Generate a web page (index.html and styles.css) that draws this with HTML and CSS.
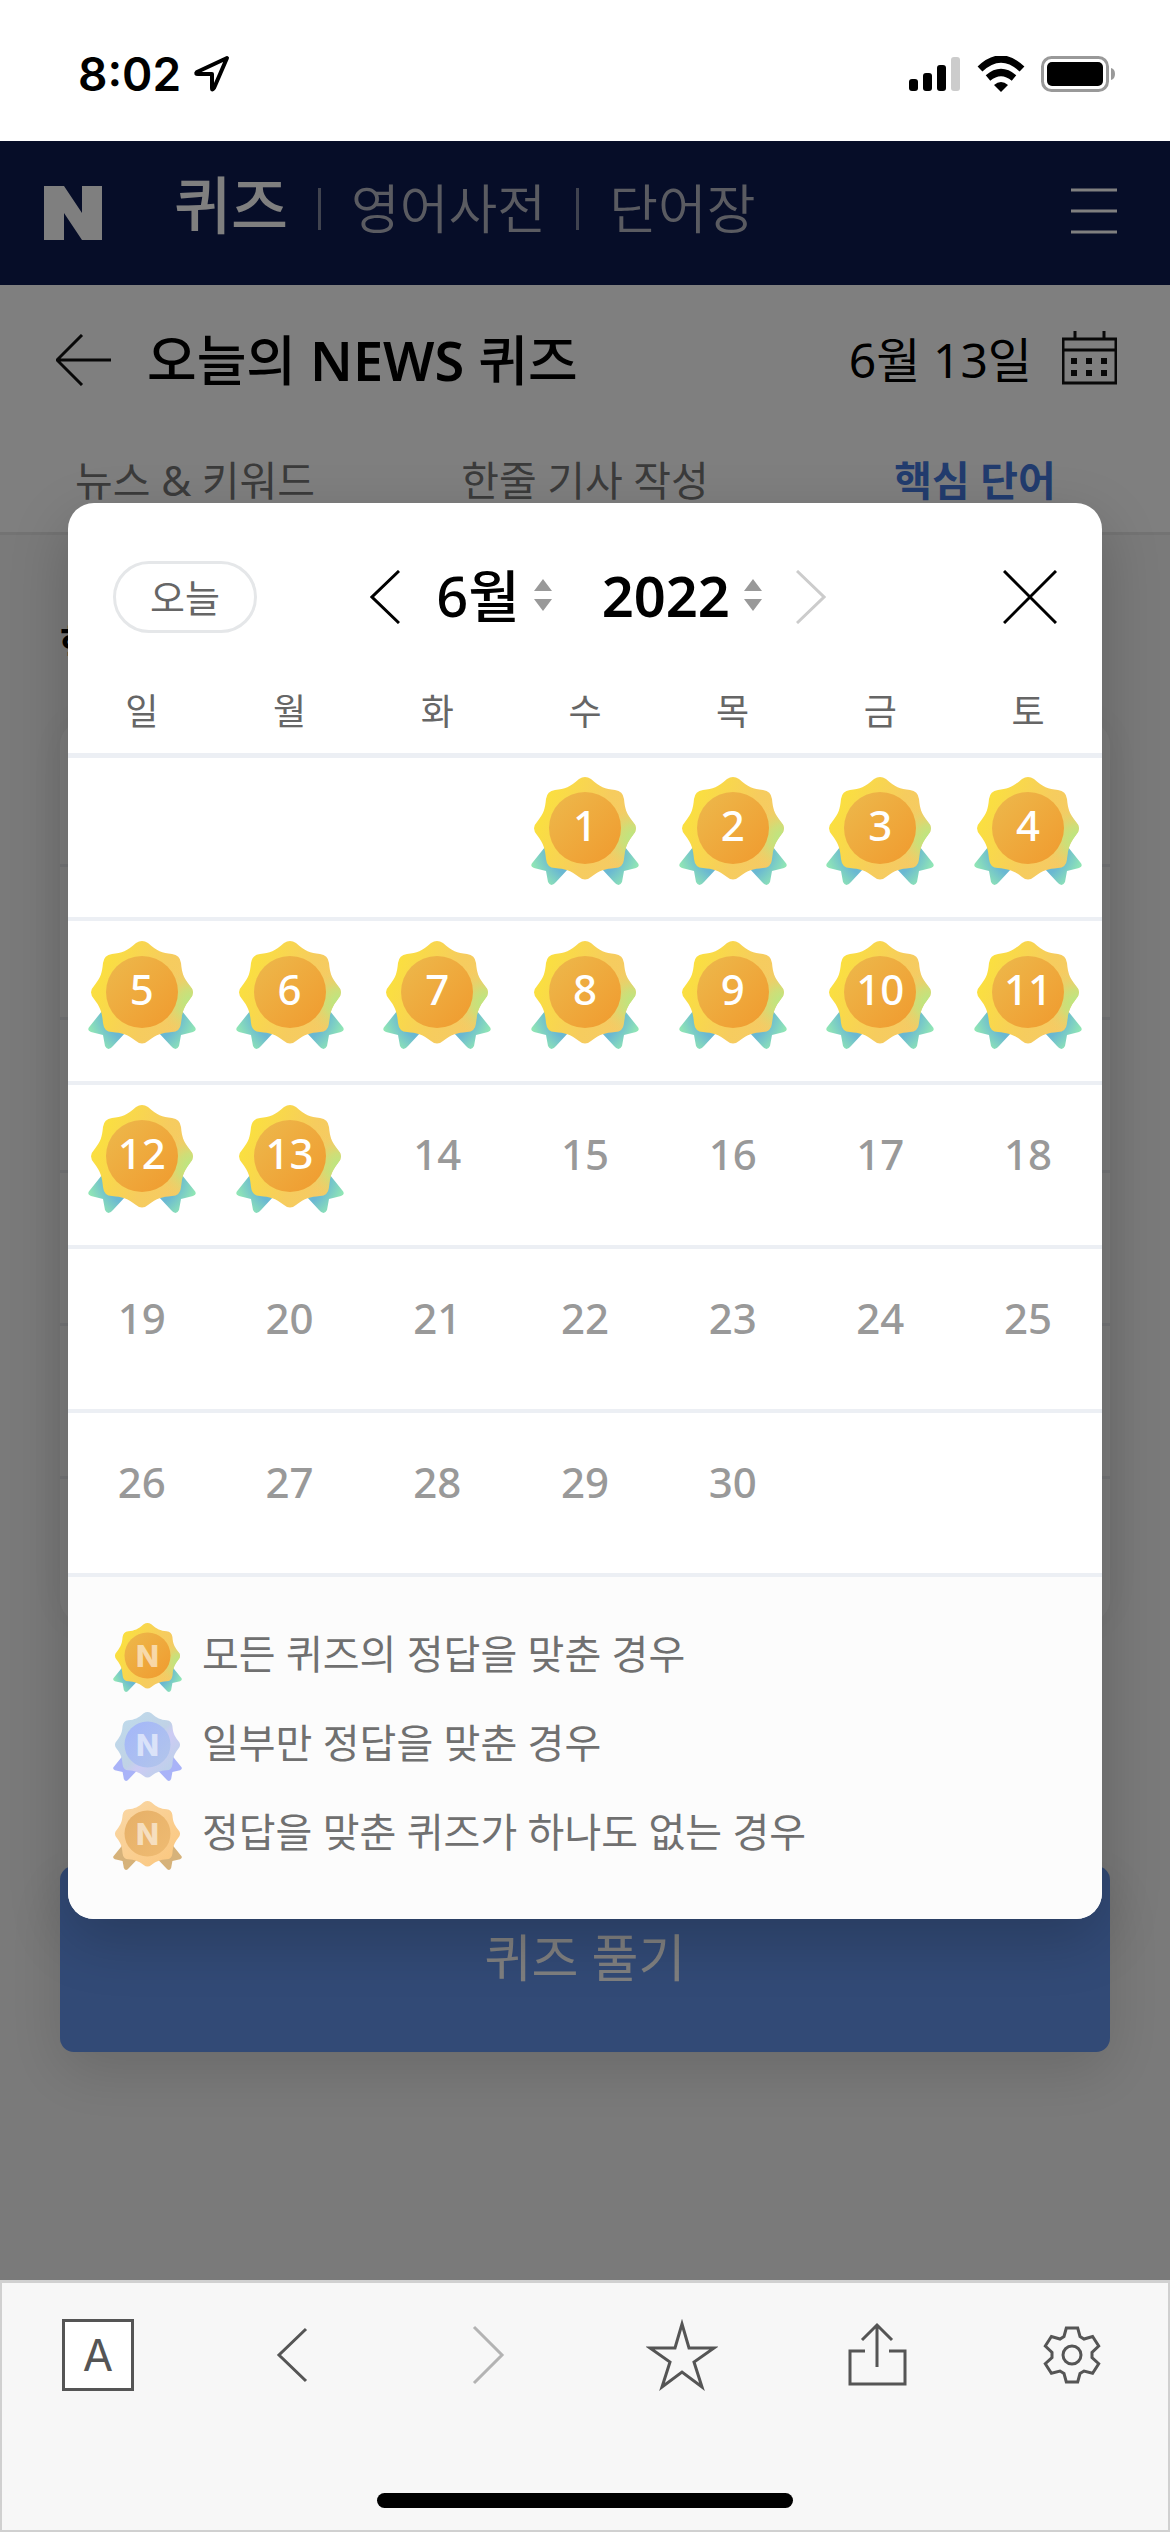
FILE: index.html
```html
<!DOCTYPE html>
<html lang="ko">
<head>
<meta charset="utf-8">
<meta name="viewport" content="width=device-width, initial-scale=1">
<title>오늘의 NEWS 퀴즈</title>
<link rel="stylesheet" href="styles.css">
</head>
<body>
<svg class="defs" aria-hidden="true">
  <defs>
    <linearGradient id="gold" x1="0" y1="0.3" x2="1" y2="0.7"><stop offset="0" stop-color="#fbe23c"/><stop offset=".6" stop-color="#f6cc5e"/><stop offset="1" stop-color="#f5ca66"/></linearGradient>
    <radialGradient id="goldTip" gradientUnits="userSpaceOnUse" cx="104" cy="62" r="36"><stop offset="0" stop-color="#b4ea86"/><stop offset=".4" stop-color="#c6e27c" stop-opacity=".8"/><stop offset="1" stop-color="#f5ca66" stop-opacity="0"/></radialGradient>
    <linearGradient id="goldIn" x1="0" y1="0" x2="1" y2="1"><stop offset="0" stop-color="#edb94c"/><stop offset="1" stop-color="#f09a2e"/></linearGradient>
    <radialGradient id="goldTail" gradientUnits="userSpaceOnUse" cx="54" cy="66" r="58"><stop offset=".65" stop-color="#6ab8d2"/><stop offset="1" stop-color="#92e8b4"/></radialGradient>
    <linearGradient id="blue" x1="0" y1="0" x2="1" y2="1"><stop offset="0" stop-color="#bfdcec"/><stop offset=".5" stop-color="#c0d2e6"/><stop offset=".6" stop-color="#cdcbf4"/><stop offset="1" stop-color="#b4d4e4"/></linearGradient>
    <linearGradient id="blueIn" x1="0" y1="0" x2="1" y2="1"><stop offset="0" stop-color="#a3b6fa"/><stop offset="1" stop-color="#b3c6ea"/></linearGradient>
    <linearGradient id="bronze" x1="0" y1="0" x2="1" y2="1"><stop offset="0" stop-color="#f9d8a8"/><stop offset="1" stop-color="#fbc67c"/></linearGradient>
    <linearGradient id="bronzeIn" x1="0" y1="0" x2="1" y2="1"><stop offset="0" stop-color="#e6b068"/><stop offset="1" stop-color="#efbb72"/></linearGradient>
    <path id="tails" d="M14 70Q18 74 34 84L38 91L25 105Q20 111 17 105L15 94L3 91Q-2 89 2 85ZM94 70Q90 74 74 84L70 91L83 105Q88 111 91 105L93 94L105 91Q110 89 106 85Z"/>
    <path id="flower" d="M48 2Q54-2 60 2C69 10 74 12 84 13Q92 14 93 22C94 32 95 36 102 45Q108 51 102 58C95 67 94 72 93 82Q92 91 84 91C74 92 69 93 60 100Q54 105 48 100C39 93 34 92 24 91Q16 91 15 82C14 72 13 67 6 58Q0 51 6 45C13 36 14 32 15 22Q16 14 24 13C34 12 39 10 48 2Z"/>
    <symbol id="medal-gold" viewBox="0 0 108 108"><use href="#tails" fill="url(#goldTail)"/><use href="#flower" fill="url(#gold)"/><use href="#flower" fill="url(#goldTip)"/><circle cx="54" cy="51" r="36" fill="url(#goldIn)"/></symbol>
    <symbol id="medal-blue" viewBox="0 0 108 108"><use href="#tails" fill="#a9b3f8"/><use href="#flower" fill="url(#blue)"/><circle cx="54" cy="51" r="36" fill="url(#blueIn)"/></symbol>
    <symbol id="medal-bronze" viewBox="0 0 108 108"><use href="#tails" fill="#d6b27a"/><use href="#flower" fill="url(#bronze)"/><circle cx="54" cy="51" r="36" fill="url(#bronzeIn)"/></symbol>
  </defs>
</svg>

<div class="status">
  <div class="status-left">
    <span class="clock">8:02</span>
    <svg width="38" height="38" viewBox="0 0 38 38"><path d="M34 3 4 17Q2 19 5 19H19V33Q19 36 21 33Z" fill="none" stroke="#000" stroke-width="4" stroke-linejoin="round"/></svg>
  </div>
  <div class="status-right">
    <svg width="52" height="36" viewBox="0 0 52 36"><rect x="0" y="23" width="9" height="12" rx="3"/><rect x="14" y="17" width="9" height="18" rx="3"/><rect x="28" y="9" width="9" height="26" rx="3"/><rect x="42" y="1" width="9" height="34" rx="3" fill="#ccc"/></svg>
    <svg width="48" height="36" viewBox="0 0 48 36"><path d="M3 13Q24-7 45 13M11 22Q24 11 37 22" fill="none" stroke="#000" stroke-width="7"/><path d="M24 36 17 29Q24 23 31 29Z"/></svg>
    <svg width="75" height="36" viewBox="0 0 75 36"><rect x="1.500" y="1.500" width="65" height="33" rx="9" fill="none" stroke="#999" stroke-width="3"/><rect x="6" y="6" width="56" height="24" rx="5"/><path d="M70 12Q74 13 74 18T70 24Z" fill="#999"/></svg>
  </div>
</div>

<div class="app">
  <header class="gnb">
    <a class="logo" href="#" aria-label="N"><svg width="58" height="54" viewBox="0 0 58 54"><path d="M0 0H20L38 27V0H58V54H38L20 27V54H0Z" fill="#fff"/></svg></a>
    <nav class="gnb-nav">
      <a class="current" href="#">퀴즈</a>
      <a href="#">영어사전</a>
      <a href="#">단어장</a>
    </nav>
    <button class="icon-btn" aria-label="메뉴"><svg width="46" height="50" viewBox="0 0 46 50"><path d="M0 2H46M0 23H46M0 44H46" stroke="#fff" stroke-width="3"/></svg></button>
  </header>
  <section class="page-head">
    <div class="title-row">
      <button class="icon-btn" aria-label="뒤로"><svg width="55" height="52" viewBox="0 0 55 52"><path d="M26 1 1 26 26 51M1 26H55" fill="none" stroke="#111" stroke-width="3"/></svg></button>
      <h1>오늘의 <b>NEWS</b> 퀴즈</h1>
      <span class="today-date">6월 13일</span>
      <button class="icon-btn" aria-label="달력"><svg width="55" height="58" viewBox="0 0 55 58"><path d="M1 8H54V52H1ZM1 19H54M13 0V8M42 0V8" fill="none" stroke="#111" stroke-width="3"/><path d="M9 30H15M24 30H30M39 30H45M9 42H15M24 42H30M39 42H45" stroke="#111" stroke-width="6"/></svg></button>
    </div>
    <nav class="tabs">
      <a href="#">뉴스 &amp; 키워드</a>
      <a href="#">한줄 기사 작성</a>
      <a class="current" href="#">핵심 단어</a>
    </nav>
  </section>
  <main class="content">
    <h2>핵심</h2>
    <div class="words"><div></div><div></div><div></div><div></div><div></div><div></div></div>
    <button class="solve">퀴즈 풀기</button>
  </main>

  <div class="dim">
    <div class="modal" role="dialog" aria-label="달력">
      <div class="modal-head">
        <button class="today-btn">오늘</button>
        <div class="picker">
          <button class="icon-btn" aria-label="이전 달"><svg width="30" height="54" viewBox="0 0 30 54"><path d="M29 1 2 27 29 53" fill="none" stroke="#000" stroke-width="3"/></svg></button>
          <button class="pick">6월<svg width="18" height="32" viewBox="0 0 18 32"><path d="M9 0 18 12H0ZM0 20H18L9 32Z" fill="#999"/></svg></button>
          <button class="pick">2022<svg width="18" height="32" viewBox="0 0 18 32"><path d="M9 0 18 12H0ZM0 20H18L9 32Z" fill="#999"/></svg></button>
          <button class="icon-btn" aria-label="다음 달"><svg width="30" height="54" viewBox="0 0 30 54"><path d="M1 1 28 27 1 53" fill="none" stroke="#ccc" stroke-width="3"/></svg></button>
        </div>
        <button class="icon-btn" aria-label="닫기"><svg width="54" height="54" viewBox="0 0 54 54"><path d="M1 1 53 53M53 1 1 53" stroke="#000" stroke-width="3"/></svg></button>
      </div>
      <table class="calendar">
        <thead><tr><th>일</th><th>월</th><th>화</th><th>수</th><th>목</th><th>금</th><th>토</th></tr></thead>
        <tbody>
          <tr><td></td><td></td><td></td>
            <td><span class="medal"><svg><use href="#medal-gold"/></svg><b>1</b></span></td>
            <td><span class="medal"><svg><use href="#medal-gold"/></svg><b>2</b></span></td>
            <td><span class="medal"><svg><use href="#medal-gold"/></svg><b>3</b></span></td>
            <td><span class="medal"><svg><use href="#medal-gold"/></svg><b>4</b></span></td></tr>
          <tr>
            <td><span class="medal"><svg><use href="#medal-gold"/></svg><b>5</b></span></td>
            <td><span class="medal"><svg><use href="#medal-gold"/></svg><b>6</b></span></td>
            <td><span class="medal"><svg><use href="#medal-gold"/></svg><b>7</b></span></td>
            <td><span class="medal"><svg><use href="#medal-gold"/></svg><b>8</b></span></td>
            <td><span class="medal"><svg><use href="#medal-gold"/></svg><b>9</b></span></td>
            <td><span class="medal"><svg><use href="#medal-gold"/></svg><b>10</b></span></td>
            <td><span class="medal"><svg><use href="#medal-gold"/></svg><b>11</b></span></td></tr>
          <tr>
            <td><span class="medal"><svg><use href="#medal-gold"/></svg><b>12</b></span></td>
            <td><span class="medal"><svg><use href="#medal-gold"/></svg><b>13</b></span></td>
            <td>14</td><td>15</td><td>16</td><td>17</td><td>18</td></tr>
          <tr><td>19</td><td>20</td><td>21</td><td>22</td><td>23</td><td>24</td><td>25</td></tr>
          <tr><td>26</td><td>27</td><td>28</td><td>29</td><td>30</td><td></td><td></td></tr>
        </tbody>
      </table>
      <ul class="legend">
        <li><span class="medal small"><svg><use href="#medal-gold"/></svg><b>N</b></span><span class="legend-text">모든 퀴즈의 정답을 맞춘 경우</span></li>
        <li><span class="medal small"><svg><use href="#medal-blue"/></svg><b>N</b></span><span class="legend-text">일부만 정답을 맞춘 경우</span></li>
        <li><span class="medal small"><svg><use href="#medal-bronze"/></svg><b>N</b></span><span class="legend-text">정답을 맞춘 퀴즈가 하나도 없는 경우</span></li>
      </ul>
    </div>
  </div>
</div>

<footer class="toolbar">
  <div class="tools">
    <button class="tool letter" aria-label="번역"><span>A</span></button>
    <button class="tool" aria-label="뒤로"><svg width="72" height="72" viewBox="0 0 72 72"><path d="M49 10 22 36 49 62" fill="none" stroke="#555" stroke-width="3"/></svg></button>
    <button class="tool" aria-label="앞으로"><svg width="72" height="72" viewBox="0 0 72 72"><path d="M22 8 50 36 22 64" fill="none" stroke="#b3b3b3" stroke-width="3"/></svg></button>
    <button class="tool" aria-label="즐겨찾기"><svg width="72" height="72" viewBox="0 0 72 72"><path d="M36 5 43 29H68L48 43 56 68 36 53 16 68 24 43 4 29H29Z" fill="none" stroke="#555" stroke-width="3"/></svg></button>
    <button class="tool" aria-label="공유"><svg width="72" height="72" viewBox="0 0 72 72"><path d="M24 32H9V65H64V32H48M36 6V48M21 21 36 6 51 21" fill="none" stroke="#555" stroke-width="3"/></svg></button>
    <button class="tool" aria-label="설정"><svg width="72" height="72" viewBox="0 0 72 72"><path d="M30.300 9H41.700L44 17.500 48 20 56.600 17.500 62.700 27 56 33.500V38.500L62.700 44.700 56.600 54.300 48 52 44 54.500 41.700 63H30.300L28 54.500 24 52 15.400 54.300 9.300 44.700 16 38.500V33.500L9.300 27 15.400 17.500 24 20 28 17.500Z" fill="none" stroke="#555" stroke-width="3"/><circle cx="36" cy="36" r="9" fill="none" stroke="#555" stroke-width="3"/></svg></button>
  </div>
  <div class="home-bar"></div>
</footer>
</body>
</html>
```
FILE: styles.css
```css
* { box-sizing: border-box; }
body {
  margin: 0;
  min-height: 100vh;
  display: flex;
  flex-direction: column;
  background: #fff;
  color: #000;
  font-family: "Noto Sans", "Noto Sans CJK KR", sans-serif;
}
a { color: inherit; text-decoration: none; }
button { padding: 0; border: 0; background: none; color: inherit; font: inherit; }
svg { display: block; }
.defs { position: absolute; width: 0; height: 0; }
.icon-btn { display: block; }

.status {
  display: flex;
  justify-content: space-between;
  height: 141px;
  padding: 50px 54px 0 78px;
}
.status-left, .status-right { display: flex; gap: 16px; height: 48px; align-items: center; }
.status-left { gap: 12px; }
.clock { font: 600 46px/48px Inter, sans-serif; }

.app { position: relative; flex: 1; display: flex; flex-direction: column; }

.gnb {
  display: flex;
  align-items: center;
  height: 144px;
  padding: 0 53px 0 44px;
  background: #0c1a50;
  color: #fff;
}
.gnb-nav { flex: 1; display: flex; align-items: center; margin-left: 72px; padding-bottom: 8px; font-size: 53px; line-height: 80px; font-weight: 350; }
.gnb-nav a { color: #b4b6c2; }
.gnb-nav a + a { display: flex; align-items: center; }
.gnb-nav a + a::before { content: ""; width: 3px; height: 42px; margin: 0 30px; background: #80869f; }
.gnb-nav .current { padding-bottom: 8px; color: #fff; font-size: 62px; font-weight: 500; }

.page-head { background: #fff; border-bottom: 3px solid #e6e6e6; }
.title-row { display: flex; align-items: center; height: 150px; padding: 0 53px 0 56px; }
.title-row h1 { flex: 1; margin: 0 0 0 36px; font-size: 54px; line-height: 80px; font-weight: 500; }
.title-row h1 b { font-weight: 600; }
.today-date { margin-right: 30px; font-size: 48px; line-height: 72px; }
.tabs { display: grid; grid-template-columns: repeat(3, 1fr); height: 97px; text-align: center; font-size: 41px; line-height: 62px; padding: 14px 0; color: #777; }
.tabs .current { color: #4478dc; font-weight: 700; }

.content { flex: 1; padding: 72px 60px 0; background: #f5f5f5; }
.content h2 { margin: 0 0 40px; font-size: 41px; line-height: 74px; font-weight: 700; }
.words { border-radius: 24px; background: #fafafa; box-shadow: 0 0 40px #0001; }
.words div { height: 153px; border-bottom: 3px solid #e8eaee; }
.words div:first-child { height: 146px; }
.words div:last-child { height: 144px; border: 0; }
.solve {
  display: block;
  width: 100%;
  height: 186px;
  margin-top: 243px;
  padding-bottom: 4px;
  border-radius: 14px;
  background: #6494ec;
  box-shadow: 0 20px 60px #0002;
  color: #fff;
  font-size: 51px;
  line-height: 72px;
}

.dim { position: absolute; inset: 0; padding: 362px 68px 0; background: #00000080; }
.modal { overflow: hidden; border-radius: 26px; background: #fff; box-shadow: 0 20px 60px #0003; }
.modal-head { display: grid; grid-template-columns: 1fr auto 1fr; align-items: center; height: 188px; padding: 0 45px; }
.modal-head > :last-child { justify-self: end; }
.today-btn { width: 144px; height: 72px; border: 3px solid #e5e7e9; border-radius: 36px; color: #666; font-size: 38px; line-height: 52px; }
.picker { display: flex; align-items: center; padding-left: 26px; }
.pick { display: flex; align-items: center; gap: 14px; padding-bottom: 4px; font-size: 56px; line-height: 72px; font-weight: 500; margin-left: 36px; }
.pick + .pick { margin-left: 50px; margin-right: 34px; font-weight: 600; }

.calendar { width: 100%; border-collapse: collapse; table-layout: fixed; }
.calendar th { height: 64px; padding: 0 0 20px; border-bottom: 5px solid #eceff4; color: #666; font-size: 36px; line-height: 36px; font-weight: 400; }
.calendar td { height: 164px; padding: 0 0 12px; border-bottom: 4px solid #eceff4; color: #999; font-size: 42px; line-height: 50px; font-weight: 500; text-align: center; }
.calendar td:not(:has(.medal)) { padding-bottom: 22px; }
.medal { display: grid; width: 108px; height: 108px; margin: 0 auto; }
.medal > * { grid-area: 1 / 1; }
.medal svg { width: 100%; height: 100%; }
.medal b { align-self: start; padding-top: 23px; color: #fff; font-weight: 500; text-align: center; }

.legend { margin: 0; padding: 46px 45px 50px; background: #fcfcfc; list-style: none; color: #707070; font-size: 40px; line-height: 62px; }
.legend li { display: flex; align-items: start; gap: 20px; height: 68px; margin-bottom: 21px; }
.legend li:last-child { margin-bottom: 0; }
.medal.small { width: 69px; height: 69px; margin: 0; }
.medal.small b { padding-top: 0; color: #ffffff90; font: 800 30px/66px Inter, sans-serif; }

.toolbar { height: 252px; padding-top: 36px; border: 2px solid #d0d0d0; border-top-width: 3px; background: #f7f7f7; }
.tools { display: flex; justify-content: space-between; padding: 0 60px; }
.tool { width: 72px; height: 72px; }
.letter span { display: block; border: 3px solid #555; background: #fff; color: #555; font: 400 44px/66px Inter, sans-serif; }
.home-bar { width: 416px; height: 15px; margin: 102px auto 0; border-radius: 8px; background: #000; }
```
